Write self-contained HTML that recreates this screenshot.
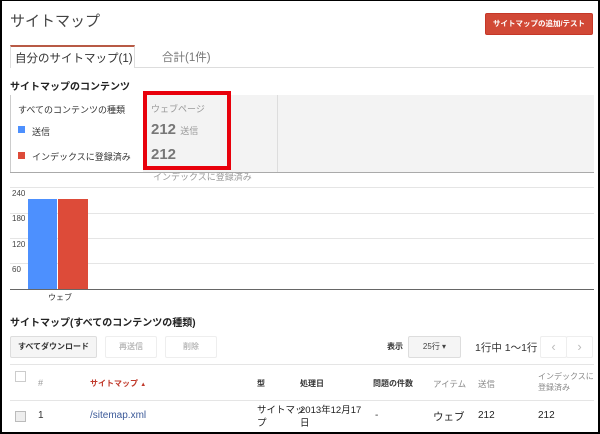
<!DOCTYPE html>
<html><head><meta charset="utf-8"><style>
*{margin:0;padding:0;box-sizing:border-box}
body{width:600px;height:434px;background:#fff;font-family:"Liberation Sans","Noto Sans CJK JP",sans-serif;color:#222;position:relative;overflow:hidden}
.a{position:absolute;white-space:nowrap}
.frame{position:absolute;left:0;top:0;width:600px;height:434px;border:1px solid #000;border-left-width:2px;border-right-width:2px;border-bottom-width:2px}
.btn{position:absolute;border:1px solid #ddd;background:#f5f5f5;border-radius:2px;font-size:8px;font-weight:bold;text-align:center;line-height:20px;white-space:nowrap;overflow:hidden}
.line{position:absolute;height:1px;background:#e5e5e5}
.cb{position:absolute;width:11px;height:11px;border:1px solid #bbb;background:#fff}
.h{font-size:9px;font-weight:bold;color:#333}
</style></head><body>
<div class="a" style="left:10px;top:10px;font-size:15px;color:#444">サイトマップ</div>
<div class="a" style="left:485px;top:13px;width:108px;height:22px;background:#d14836;border:1px solid #c53727;border-radius:2px;color:#fff;font-size:7.5px;font-weight:bold;text-align:center;line-height:20px">サイトマップの追加/テスト</div>

<div class="a" style="left:10px;top:45px;width:125px;height:23px;border:1px solid #ddd;border-top:2px solid #b85a45;border-bottom:none;background:#fff;font-size:11.5px;color:#333;padding:3px 0 0 4px;z-index:2">自分のサイトマップ(1)</div>
<div class="a" style="left:162px;top:49px;font-size:11.5px;color:#777">合計(1件)</div>
<div class="line" style="left:10px;top:67px;width:584px;background:#ddd"></div>

<div class="a" style="left:10px;top:78px;font-size:10px;font-weight:bold;color:#222">サイトマップのコンテンツ</div>
<div class="a" style="left:10px;top:95px;width:584px;height:78px;background:#f3f3f3;border-bottom:1px solid #aaa"></div>
<div class="a" style="left:10px;top:95px;width:133px;height:77px;background:#fff;border-left:1px solid #ccc"></div>
<div class="a" style="left:277px;top:95px;width:1px;height:77px;background:#ddd"></div>
<div class="a" style="left:18px;top:103px;font-size:9px;color:#333">すべてのコンテンツの種類</div>
<div class="a" style="left:18px;top:126px;width:7px;height:7px;background:#4d90fe"></div>
<div class="a" style="left:32px;top:125px;font-size:9px;color:#333">送信</div>
<div class="a" style="left:18px;top:152px;width:7px;height:7px;background:#dd4b39"></div>
<div class="a" style="left:32px;top:150px;font-size:9px;color:#333">インデックスに登録済み</div>
<div class="a" style="left:143px;top:91px;width:88px;height:79px;border:4px solid #e8000b"></div>
<div class="a" style="left:151px;top:102px;font-size:9px;color:#999">ウェブページ</div>
<div class="a" style="left:151px;top:121px;font-size:15px;font-weight:bold;color:#777">212 <span style="font-size:9px;font-weight:normal;color:#999">送信</span></div>
<div class="a" style="left:151px;top:146px;font-size:15px;font-weight:bold;color:#777">212</div>
<div class="a" style="left:153px;top:170px;font-size:9px;color:#999">インデックスに登録済み</div>

<div class="line" style="left:10px;top:187px;width:584px"></div>
<div class="line" style="left:10px;top:213px;width:584px"></div>
<div class="line" style="left:10px;top:238px;width:584px"></div>
<div class="line" style="left:10px;top:263px;width:584px"></div>
<div class="a" style="left:12px;top:189px;font-size:8px;color:#444">240</div>
<div class="a" style="left:12px;top:214px;font-size:8px;color:#444">180</div>
<div class="a" style="left:12px;top:240px;font-size:8px;color:#444">120</div>
<div class="a" style="left:12px;top:265px;font-size:8px;color:#444">60</div>
<div class="a" style="left:28px;top:199px;width:29px;height:90px;background:#4d90fe"></div>
<div class="a" style="left:58px;top:199px;width:30px;height:90px;background:#dd4b39"></div>
<div class="a" style="left:10px;top:289px;width:584px;height:1px;background:#666"></div>
<div class="a" style="left:48px;top:292px;font-size:8px;color:#333">ウェブ</div>

<div class="a" style="left:10px;top:314px;font-size:10px;font-weight:bold;color:#222">サイトマップ(すべてのコンテンツの種類)</div>
<div class="btn" style="left:10px;top:336px;width:87px;height:22px;color:#333">すべてダウンロード</div>
<div class="btn" style="left:105px;top:336px;width:52px;height:22px;color:#bbb;background:#fff;border-color:#eee">再送信</div>
<div class="btn" style="left:165px;top:336px;width:52px;height:22px;color:#bbb;background:#fff;border-color:#eee">削除</div>
<div class="a" style="left:387px;top:341px;font-size:8px;font-weight:bold;color:#333">表示</div>
<div class="btn" style="left:408px;top:336px;width:53px;height:22px;font-weight:normal;color:#444">25行 ▾</div>
<div class="a" style="left:475px;top:340px;font-size:10.5px;color:#333">1行中 1〜1行</div>
<div class="btn" style="left:540px;top:336px;width:27px;height:22px;background:#fff;color:#bbb;font-size:13px;font-weight:normal;border-color:#eee">‹</div>
<div class="btn" style="left:566px;top:336px;width:27px;height:22px;background:#fff;color:#bbb;font-size:13px;font-weight:normal;border-color:#eee">›</div>
<div class="line" style="left:10px;top:364px;width:584px"></div>

<div class="cb" style="left:15px;top:371px;border-color:#ccc"></div>
<div class="a h" style="left:38px;top:378px;color:#999;font-weight:normal">#</div>
<div class="a h" style="left:90px;top:378px;color:#c0392b;font-size:8px">サイトマップ <span style="font-size:6px">▲</span></div>
<div class="a h" style="left:257px;top:378px;font-size:8px">型</div>
<div class="a h" style="left:300px;top:378px;font-size:8px">処理日</div>
<div class="a h" style="left:373px;top:378px;font-size:8px">問題の件数</div>
<div class="a" style="left:433px;top:378px;font-size:8.5px;color:#888">アイテム</div>
<div class="a" style="left:478px;top:378px;font-size:8.5px;color:#888">送信</div>
<div class="a" style="left:538px;top:371px;font-size:8px;color:#888;line-height:11px">インデックスに<br>登録済み</div>
<div class="line" style="left:10px;top:400px;width:584px"></div>

<div class="cb" style="left:15px;top:411px;background:#eee"></div>
<div class="a" style="left:38px;top:410px;font-size:10px;color:#333">1</div>
<div class="a" style="left:90px;top:410px;font-size:10px;color:#3b5998">/sitemap.xml</div>
<div class="a" style="left:257px;top:404px;font-size:9.5px;color:#222;line-height:13px">サイトマッ<br>プ</div>
<div class="a" style="left:300px;top:404px;font-size:9.5px;color:#222;line-height:13px">2013年12月17<br>日</div>
<div class="a" style="left:375px;top:410px;font-size:10px;color:#333">-</div>
<div class="a" style="left:433px;top:409px;font-size:10.5px;color:#222">ウェブ</div>
<div class="a" style="left:478px;top:410px;font-size:10px;color:#222">212</div>
<div class="a" style="left:538px;top:410px;font-size:10px;color:#222">212</div>
<div class="frame"></div>
</body></html>
